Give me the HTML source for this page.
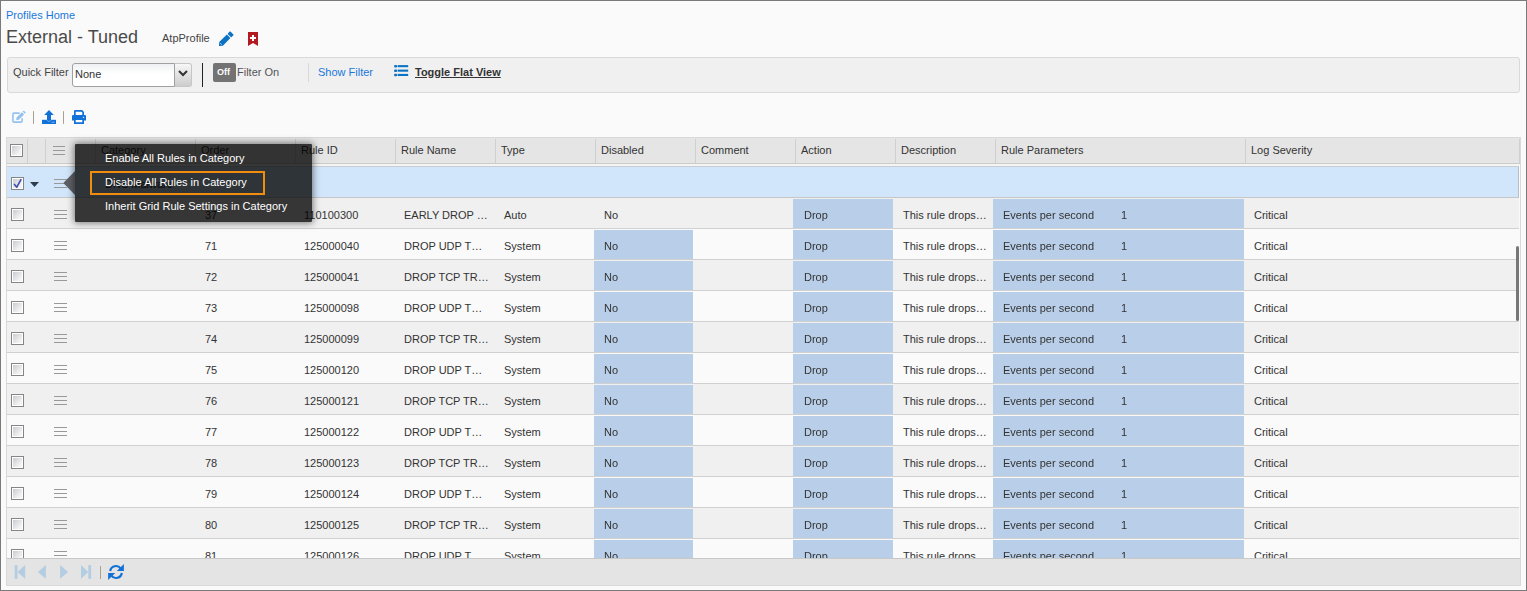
<!DOCTYPE html><html><head><meta charset="utf-8"><style>
*{box-sizing:border-box;margin:0;padding:0}
html,body{width:1527px;height:591px;overflow:hidden}
body{background:#fafafa;font-family:"Liberation Sans",sans-serif;font-size:11px;color:#333;position:relative}
.frame{position:absolute;left:0;top:0;width:1527px;height:591px;border:1px solid #7a7a7a;pointer-events:none;z-index:50}
.a{position:absolute;white-space:nowrap;line-height:13px}
.link{color:#1a78dc}
.title{font-size:18px;line-height:21px;color:#4a4a4a}
.fbar{position:absolute;left:7px;top:57px;width:1513px;height:36px;background:#f0f0f0;border:1px solid #d9d9d9;border-radius:3px}
.sel{position:absolute;left:72px;top:63px;width:103px;height:24px;background:linear-gradient(#eef1f2,#fff 45%);border:1px solid #a0a0a0;border-radius:3px 0 0 3px}
.selbtn{position:absolute;left:175px;top:63px;width:17px;height:24px;background:linear-gradient(#f7f7f7,#e8e8e8 35%,#cdcdcd);border:1px solid #c6c6c6;border-left:0;border-radius:0 3px 3px 0}
.toggle{position:absolute;left:213px;top:63px;width:23px;height:19px;background:#737373;border-radius:2px;color:#fff;font-weight:bold;font-size:9px;line-height:11px;padding:4px 0 0 4px}
.grid{position:absolute;left:6px;top:137px;width:1515px;height:449px;border:1px solid #d9d9d9;background:#fafafa;overflow:hidden}
.hdr{position:absolute;left:0;top:0;width:1513px;height:26px;background:#e5e5e5;border-bottom:1px solid #cbcbcb}
.hd{position:absolute;top:1px;width:1px;height:24px;background:#cfcfcf}
.row{position:absolute;left:0;width:1512px;height:31px;border-bottom:1px solid #d0d0d0}
.r0{background:#f0f0f0}.r1{background:#fafafa}
.hl{position:absolute;top:1px;height:29px;background:#b9cfe9}
.cb{position:absolute;width:13px;height:13px;border:1px solid #858585;background:#fff;padding:1px}
.cb i{display:block;width:9px;height:9px;background:linear-gradient(135deg,#c9ccd2,#f4f4f4 80%)}
.hb{position:absolute;width:13px;height:9px;border-top:1px solid #999;border-bottom:1px solid #999}
.hb i{position:absolute;left:0;top:3px;width:13px;height:1px;background:#999}
.pager{position:absolute;left:0;top:420px;width:1513px;height:28px;background:#e4e4e4;border-top:1px solid #c8c8c8}
.scroll{position:absolute;left:1509px;top:108px;width:3px;height:75px;background:#777;border-radius:2px}
.pop{position:absolute;left:75px;top:144px;width:237px;height:78px;background:rgba(0,0,0,.775);border-radius:1px;box-shadow:0 0 7px 1px rgba(0,0,0,.5);z-index:10}
.pop .a{color:#fff}
.arrow{position:absolute;left:63.3px;top:171px;width:0;height:0;border-top:11.5px solid transparent;border-bottom:11.5px solid transparent;border-right:11.7px solid #5d6065;z-index:10}
.obox{position:absolute;left:90px;top:171px;width:175px;height:24px;border:2px solid #f28c0f;z-index:11}
</style></head><body>
<div class="frame"></div>
<div class="a link" style="left:6px;top:9px">Profiles Home</div>
<div class="a title" style="left:6px;top:27px">External - Tuned</div>
<div class="a" style="left:162px;top:32px;color:#444">AtpProfile</div>
<svg class="a" style="left:214px;top:28px" width="24" height="22" viewBox="214 28 24 22"><path d="M219 45.9 L219.2 41.9 L226.9 34.6 L230.4 38.1 L222.9 45.8 Z" fill="#0b72c4"/><path d="M228.3 33.8 L230.1 32 L233 34.9 L231.2 36.7 Z" fill="#0b72c4" stroke="#0b72c4" stroke-width="1.1" stroke-linejoin="round"/><path d="M219.8 42.8 L221.8 44.8" stroke="#9cc6ea" stroke-width="0.9"/></svg>
<svg class="a" style="left:247px;top:31px" width="12" height="16" viewBox="0 0 12 16"><path d="M1 1 H11 V15 L6 12 L1 15 Z" fill="#b01c22"/><path d="M5 4 H7 V6 H9 V8 H7 V10 H5 V8 H3 V6 H5 Z" fill="#fff"/></svg>
<div class="fbar"></div>
<div class="a" style="left:13px;top:66px;color:#444">Quick Filter</div>
<div class="sel"></div><div class="selbtn"></div>
<svg class="a" style="left:178px;top:70px" width="10" height="7" viewBox="0 0 10 7"><path d="M1 1 L5 5 L9 1" stroke="#333" stroke-width="2" fill="none"/></svg>
<div class="a" style="left:75px;top:68px;color:#333">None</div>
<div class="a" style="left:202px;top:63px;width:1px;height:24px;background:#222"></div>
<div class="toggle">Off</div>
<div class="a" style="left:237px;top:66px;color:#555">Filter On</div>
<div class="a" style="left:308px;top:63px;width:1px;height:19px;background:#d8d8d8"></div>
<div class="a link" style="left:318px;top:66px">Show Filter</div>
<svg class="a" style="left:390px;top:60px" width="24" height="20" viewBox="390 60 24 20"><g fill="#0b72c4"><rect x="394.2" y="65" width="2.8" height="2.4" rx="0.7"/><rect x="394.2" y="69.5" width="2.8" height="2.4" rx="0.7"/><rect x="394.2" y="73.8" width="2.8" height="2.4" rx="0.7"/><rect x="397.6" y="65.1" width="10.6" height="2.1"/><rect x="397.6" y="69.6" width="10.6" height="2.1"/><rect x="397.6" y="73.9" width="10.6" height="2.1"/></g></svg>
<div class="a" style="left:415px;top:66px;color:#333;font-weight:bold;text-decoration:underline">Toggle Flat View</div>
<svg class="a" style="left:8px;top:106px" width="84" height="22" viewBox="8 106 84 22"><path d="M19.6 113.1 H14.1 Q12.9 113.1 12.9 114.3 V120.9 Q12.9 122.1 14.1 122.1 H20.9 Q22.1 122.1 22.1 120.9 V118.3" stroke="#94c1ee" stroke-width="1.6" fill="none"/><path d="M16.6 117.6 L21.9 112.3 L24.1 114.5 L18.8 119.8 L16.2 120.2 Z" fill="#94c1ee"/><path d="M22.6 111.6 L23.3 110.9 Q23.8 110.4 24.3 110.9 L25.4 112 Q25.9 112.5 25.4 113 L24.8 113.7 Z" fill="#94c1ee"/><rect x="33" y="111.2" width="1" height="12.6" fill="#a9a190"/><path d="M49 110 L53.8 114.9 H51 V120 H47 V114.9 H44.2 Z" fill="#1271d8"/><path d="M42 119.8 H56 V124 H42 Z" fill="#1271d8"/><path d="M46.8 119.8 Q49 122.2 51.2 119.8 V120.6 Q49 122.8 46.8 120.6 Z" fill="#8dbcee"/><rect x="51.6" y="121.8" width="2.8" height="0.8" fill="#9cc3ef"/><rect x="63" y="111.2" width="1" height="12.6" fill="#a9a190"/><path d="M74 111.2 Q74 110.1 75.1 110.1 H82.2 L84 111.9 V116 H82.3 V112.4 L81.6 111.8 H75.7 V116 H74 Z" fill="#1271d8"/><path d="M73.1 115.1 H84.9 Q86 115.1 86 116.2 V120.6 H84 V123.9 H74 V120.6 H72 V116.2 Q72 115.1 73.1 115.1 Z M75.7 120 V122.2 H82.3 V120 Z" fill="#1271d8" fill-rule="evenodd"/><circle cx="83.5" cy="117.4" r="0.7" fill="#e8f0fa"/></svg>
<div class="grid">
<div class="hdr">
<div class="hd" style="left:20px"></div>
<div class="hd" style="left:38px"></div>
<div class="hd" style="left:88px"></div>
<div class="hd" style="left:188px"></div>
<div class="hd" style="left:288px"></div>
<div class="hd" style="left:388px"></div>
<div class="hd" style="left:488px"></div>
<div class="hd" style="left:588px"></div>
<div class="hd" style="left:688px"></div>
<div class="hd" style="left:788px"></div>
<div class="hd" style="left:888px"></div>
<div class="hd" style="left:988px"></div>
<div class="hd" style="left:1238px"></div>
<div class="hd" style="left:1512px"></div>
<div class="cb" style="left:3px;top:6px"><i></i></div>
<div class="hb" style="left:46px;top:8px;width:12px"><i style="width:12px"></i></div>
<div class="a" style="left:94px;top:6px">Category</div>
<div class="a" style="left:194px;top:6px">Order</div>
<div class="a" style="left:294px;top:6px">Rule ID</div>
<div class="a" style="left:394px;top:6px">Rule Name</div>
<div class="a" style="left:494px;top:6px">Type</div>
<div class="a" style="left:594px;top:6px">Disabled</div>
<div class="a" style="left:694px;top:6px">Comment</div>
<div class="a" style="left:794px;top:6px">Action</div>
<div class="a" style="left:894px;top:6px">Description</div>
<div class="a" style="left:994px;top:6px">Rule Parameters</div>
<div class="a" style="left:1244px;top:6px">Log Severity</div>
</div>
<div class="a" style="left:0;top:26px;width:1513px;height:2px;background:#f4f4f4"></div>
<div class="row" style="top:28px;height:32px;background:#d1e6fb;border-top:1px solid #c8cdd2;border-bottom:1px solid #c6c6c6;border-right:1px solid #b9bec4;width:1512px"></div>
<div class="cb" style="left:4px;top:39px"><i></i><svg width="11" height="11" viewBox="0 0 11 11" style="position:absolute;left:0;top:0"><path d="M2.5 6.4 L4.8 9.2 L8.9 1.7" stroke="#3b4fae" stroke-width="1.6" fill="none" stroke-linecap="round" stroke-linejoin="round"/></svg></div>
<svg class="a" style="left:23px;top:44px" width="9" height="5" viewBox="0 0 9 5"><path d="M0 0 H9 L4.5 5 Z" fill="#2e3d4d"/></svg>
<div class="hb" style="left:47px;top:41px"><i></i></div>
<div class="a" style="left:98px;top:40px">DNS Malware</div>
<div class="row r0" style="top:60px">
<div class="hl" style="left:786px;width:100px"></div>
<div class="hl" style="left:986px;width:251px"></div>
</div>
<div class="cb" style="left:4px;top:70px"><i></i></div>
<div class="hb" style="left:47px;top:72px"><i></i></div>
<div class="a" style="left:198px;top:71px">37</div>
<div class="a" style="left:297px;top:71px">110100300</div>
<div class="a" style="left:397px;top:71px">EARLY DROP …</div>
<div class="a" style="left:497px;top:71px">Auto</div>
<div class="a" style="left:597px;top:71px">No</div>
<div class="a" style="left:796.5px;top:71px;will-change:transform">Drop</div>
<div class="a" style="left:896px;top:71px">This rule drops…</div>
<div class="a" style="left:995.5px;top:71px;will-change:transform">Events per second</div>
<div class="a" style="left:1113.5px;top:71px;will-change:transform">1</div>
<div class="a" style="left:1247px;top:71px">Critical</div>
<div class="row r1" style="top:91px">
<div class="hl" style="left:587px;width:99px"></div>
<div class="hl" style="left:786px;width:100px"></div>
<div class="hl" style="left:986px;width:251px"></div>
</div>
<div class="cb" style="left:4px;top:101px"><i></i></div>
<div class="hb" style="left:47px;top:103px"><i></i></div>
<div class="a" style="left:198px;top:102px">71</div>
<div class="a" style="left:297px;top:102px">125000040</div>
<div class="a" style="left:397px;top:102px">DROP UDP T…</div>
<div class="a" style="left:497px;top:102px">System</div>
<div class="a" style="left:596.5px;top:102px;will-change:transform">No</div>
<div class="a" style="left:796.5px;top:102px;will-change:transform">Drop</div>
<div class="a" style="left:896px;top:102px">This rule drops…</div>
<div class="a" style="left:995.5px;top:102px;will-change:transform">Events per second</div>
<div class="a" style="left:1113.5px;top:102px;will-change:transform">1</div>
<div class="a" style="left:1247px;top:102px">Critical</div>
<div class="row r0" style="top:122px">
<div class="hl" style="left:587px;width:99px"></div>
<div class="hl" style="left:786px;width:100px"></div>
<div class="hl" style="left:986px;width:251px"></div>
</div>
<div class="cb" style="left:4px;top:132px"><i></i></div>
<div class="hb" style="left:47px;top:134px"><i></i></div>
<div class="a" style="left:198px;top:133px">72</div>
<div class="a" style="left:297px;top:133px">125000041</div>
<div class="a" style="left:397px;top:133px">DROP TCP TR…</div>
<div class="a" style="left:497px;top:133px">System</div>
<div class="a" style="left:596.5px;top:133px;will-change:transform">No</div>
<div class="a" style="left:796.5px;top:133px;will-change:transform">Drop</div>
<div class="a" style="left:896px;top:133px">This rule drops…</div>
<div class="a" style="left:995.5px;top:133px;will-change:transform">Events per second</div>
<div class="a" style="left:1113.5px;top:133px;will-change:transform">1</div>
<div class="a" style="left:1247px;top:133px">Critical</div>
<div class="row r1" style="top:153px">
<div class="hl" style="left:587px;width:99px"></div>
<div class="hl" style="left:786px;width:100px"></div>
<div class="hl" style="left:986px;width:251px"></div>
</div>
<div class="cb" style="left:4px;top:163px"><i></i></div>
<div class="hb" style="left:47px;top:165px"><i></i></div>
<div class="a" style="left:198px;top:164px">73</div>
<div class="a" style="left:297px;top:164px">125000098</div>
<div class="a" style="left:397px;top:164px">DROP UDP T…</div>
<div class="a" style="left:497px;top:164px">System</div>
<div class="a" style="left:596.5px;top:164px;will-change:transform">No</div>
<div class="a" style="left:796.5px;top:164px;will-change:transform">Drop</div>
<div class="a" style="left:896px;top:164px">This rule drops…</div>
<div class="a" style="left:995.5px;top:164px;will-change:transform">Events per second</div>
<div class="a" style="left:1113.5px;top:164px;will-change:transform">1</div>
<div class="a" style="left:1247px;top:164px">Critical</div>
<div class="row r0" style="top:184px">
<div class="hl" style="left:587px;width:99px"></div>
<div class="hl" style="left:786px;width:100px"></div>
<div class="hl" style="left:986px;width:251px"></div>
</div>
<div class="cb" style="left:4px;top:194px"><i></i></div>
<div class="hb" style="left:47px;top:196px"><i></i></div>
<div class="a" style="left:198px;top:195px">74</div>
<div class="a" style="left:297px;top:195px">125000099</div>
<div class="a" style="left:397px;top:195px">DROP TCP TR…</div>
<div class="a" style="left:497px;top:195px">System</div>
<div class="a" style="left:596.5px;top:195px;will-change:transform">No</div>
<div class="a" style="left:796.5px;top:195px;will-change:transform">Drop</div>
<div class="a" style="left:896px;top:195px">This rule drops…</div>
<div class="a" style="left:995.5px;top:195px;will-change:transform">Events per second</div>
<div class="a" style="left:1113.5px;top:195px;will-change:transform">1</div>
<div class="a" style="left:1247px;top:195px">Critical</div>
<div class="row r1" style="top:215px">
<div class="hl" style="left:587px;width:99px"></div>
<div class="hl" style="left:786px;width:100px"></div>
<div class="hl" style="left:986px;width:251px"></div>
</div>
<div class="cb" style="left:4px;top:225px"><i></i></div>
<div class="hb" style="left:47px;top:227px"><i></i></div>
<div class="a" style="left:198px;top:226px">75</div>
<div class="a" style="left:297px;top:226px">125000120</div>
<div class="a" style="left:397px;top:226px">DROP UDP T…</div>
<div class="a" style="left:497px;top:226px">System</div>
<div class="a" style="left:596.5px;top:226px;will-change:transform">No</div>
<div class="a" style="left:796.5px;top:226px;will-change:transform">Drop</div>
<div class="a" style="left:896px;top:226px">This rule drops…</div>
<div class="a" style="left:995.5px;top:226px;will-change:transform">Events per second</div>
<div class="a" style="left:1113.5px;top:226px;will-change:transform">1</div>
<div class="a" style="left:1247px;top:226px">Critical</div>
<div class="row r0" style="top:246px">
<div class="hl" style="left:587px;width:99px"></div>
<div class="hl" style="left:786px;width:100px"></div>
<div class="hl" style="left:986px;width:251px"></div>
</div>
<div class="cb" style="left:4px;top:256px"><i></i></div>
<div class="hb" style="left:47px;top:258px"><i></i></div>
<div class="a" style="left:198px;top:257px">76</div>
<div class="a" style="left:297px;top:257px">125000121</div>
<div class="a" style="left:397px;top:257px">DROP TCP TR…</div>
<div class="a" style="left:497px;top:257px">System</div>
<div class="a" style="left:596.5px;top:257px;will-change:transform">No</div>
<div class="a" style="left:796.5px;top:257px;will-change:transform">Drop</div>
<div class="a" style="left:896px;top:257px">This rule drops…</div>
<div class="a" style="left:995.5px;top:257px;will-change:transform">Events per second</div>
<div class="a" style="left:1113.5px;top:257px;will-change:transform">1</div>
<div class="a" style="left:1247px;top:257px">Critical</div>
<div class="row r1" style="top:277px">
<div class="hl" style="left:587px;width:99px"></div>
<div class="hl" style="left:786px;width:100px"></div>
<div class="hl" style="left:986px;width:251px"></div>
</div>
<div class="cb" style="left:4px;top:287px"><i></i></div>
<div class="hb" style="left:47px;top:289px"><i></i></div>
<div class="a" style="left:198px;top:288px">77</div>
<div class="a" style="left:297px;top:288px">125000122</div>
<div class="a" style="left:397px;top:288px">DROP UDP T…</div>
<div class="a" style="left:497px;top:288px">System</div>
<div class="a" style="left:596.5px;top:288px;will-change:transform">No</div>
<div class="a" style="left:796.5px;top:288px;will-change:transform">Drop</div>
<div class="a" style="left:896px;top:288px">This rule drops…</div>
<div class="a" style="left:995.5px;top:288px;will-change:transform">Events per second</div>
<div class="a" style="left:1113.5px;top:288px;will-change:transform">1</div>
<div class="a" style="left:1247px;top:288px">Critical</div>
<div class="row r0" style="top:308px">
<div class="hl" style="left:587px;width:99px"></div>
<div class="hl" style="left:786px;width:100px"></div>
<div class="hl" style="left:986px;width:251px"></div>
</div>
<div class="cb" style="left:4px;top:318px"><i></i></div>
<div class="hb" style="left:47px;top:320px"><i></i></div>
<div class="a" style="left:198px;top:319px">78</div>
<div class="a" style="left:297px;top:319px">125000123</div>
<div class="a" style="left:397px;top:319px">DROP TCP TR…</div>
<div class="a" style="left:497px;top:319px">System</div>
<div class="a" style="left:596.5px;top:319px;will-change:transform">No</div>
<div class="a" style="left:796.5px;top:319px;will-change:transform">Drop</div>
<div class="a" style="left:896px;top:319px">This rule drops…</div>
<div class="a" style="left:995.5px;top:319px;will-change:transform">Events per second</div>
<div class="a" style="left:1113.5px;top:319px;will-change:transform">1</div>
<div class="a" style="left:1247px;top:319px">Critical</div>
<div class="row r1" style="top:339px">
<div class="hl" style="left:587px;width:99px"></div>
<div class="hl" style="left:786px;width:100px"></div>
<div class="hl" style="left:986px;width:251px"></div>
</div>
<div class="cb" style="left:4px;top:349px"><i></i></div>
<div class="hb" style="left:47px;top:351px"><i></i></div>
<div class="a" style="left:198px;top:350px">79</div>
<div class="a" style="left:297px;top:350px">125000124</div>
<div class="a" style="left:397px;top:350px">DROP UDP T…</div>
<div class="a" style="left:497px;top:350px">System</div>
<div class="a" style="left:596.5px;top:350px;will-change:transform">No</div>
<div class="a" style="left:796.5px;top:350px;will-change:transform">Drop</div>
<div class="a" style="left:896px;top:350px">This rule drops…</div>
<div class="a" style="left:995.5px;top:350px;will-change:transform">Events per second</div>
<div class="a" style="left:1113.5px;top:350px;will-change:transform">1</div>
<div class="a" style="left:1247px;top:350px">Critical</div>
<div class="row r0" style="top:370px">
<div class="hl" style="left:587px;width:99px"></div>
<div class="hl" style="left:786px;width:100px"></div>
<div class="hl" style="left:986px;width:251px"></div>
</div>
<div class="cb" style="left:4px;top:380px"><i></i></div>
<div class="hb" style="left:47px;top:382px"><i></i></div>
<div class="a" style="left:198px;top:381px">80</div>
<div class="a" style="left:297px;top:381px">125000125</div>
<div class="a" style="left:397px;top:381px">DROP TCP TR…</div>
<div class="a" style="left:497px;top:381px">System</div>
<div class="a" style="left:596.5px;top:381px;will-change:transform">No</div>
<div class="a" style="left:796.5px;top:381px;will-change:transform">Drop</div>
<div class="a" style="left:896px;top:381px">This rule drops…</div>
<div class="a" style="left:995.5px;top:381px;will-change:transform">Events per second</div>
<div class="a" style="left:1113.5px;top:381px;will-change:transform">1</div>
<div class="a" style="left:1247px;top:381px">Critical</div>
<div class="row r1" style="top:401px">
<div class="hl" style="left:587px;width:99px"></div>
<div class="hl" style="left:786px;width:100px"></div>
<div class="hl" style="left:986px;width:251px"></div>
</div>
<div class="cb" style="left:4px;top:411px"><i></i></div>
<div class="hb" style="left:47px;top:413px"><i></i></div>
<div class="a" style="left:198px;top:412px">81</div>
<div class="a" style="left:297px;top:412px">125000126</div>
<div class="a" style="left:397px;top:412px">DROP UDP T…</div>
<div class="a" style="left:497px;top:412px">System</div>
<div class="a" style="left:596.5px;top:412px;will-change:transform">No</div>
<div class="a" style="left:796.5px;top:412px;will-change:transform">Drop</div>
<div class="a" style="left:896px;top:412px">This rule drops…</div>
<div class="a" style="left:995.5px;top:412px;will-change:transform">Events per second</div>
<div class="a" style="left:1113.5px;top:412px;will-change:transform">1</div>
<div class="a" style="left:1247px;top:412px">Critical</div>
<div class="scroll"></div>
<div class="pager"></div>
</div>
<svg class="a" style="left:8px;top:558px;z-index:5" width="124" height="28" viewBox="8 558 124 28"><rect x="14.7" y="565.1" width="2.8" height="13.7" fill="#b3cde2"/><path d="M25.1 565.1 V578.8 L17.5 572 Z" fill="#b3cde2"/><path d="M45.9 565.1 V578.8 L37.9 572 Z" fill="#b3cde2"/><path d="M60.1 565.1 V578.8 L68 572 Z" fill="#b3cde2"/><path d="M81 565.1 V578.8 L88.3 572 Z" fill="#b3cde2"/><rect x="88.3" y="565.1" width="2.8" height="13.7" fill="#b3cde2"/><rect x="100" y="566" width="1" height="13" fill="#a9a190"/><path d="M110.2 571 A5.8 5.8 0 0 1 120.6 568.4" stroke="#1271d8" stroke-width="2.2" fill="none"/><path d="M123.9 563.9 V571 H116.8 Z" fill="#1271d8"/><path d="M121.8 573 A5.8 5.8 0 0 1 111.4 575.6" stroke="#1271d8" stroke-width="2.2" fill="none"/><path d="M108.1 573 H115.2 L108.1 580.1 Z" fill="#1271d8"/></svg>
<svg class="a" style="left:60px;top:168px;z-index:10" width="16" height="30" viewBox="60 168 16 30"><path d="M63.3 183 L75 171 V195 Z" fill="#5d6065"/></svg>
<div class="pop"></div>
<div class="obox"></div>
<div class="a" style="left:105px;top:152px;color:#fff;z-index:12">Enable All Rules in Category</div>
<div class="a" style="left:105px;top:176px;color:#fff;z-index:12">Disable All Rules in Category</div>
<div class="a" style="left:105px;top:200px;color:#fff;z-index:12">Inherit Grid Rule Settings in Category</div>
</body></html>
